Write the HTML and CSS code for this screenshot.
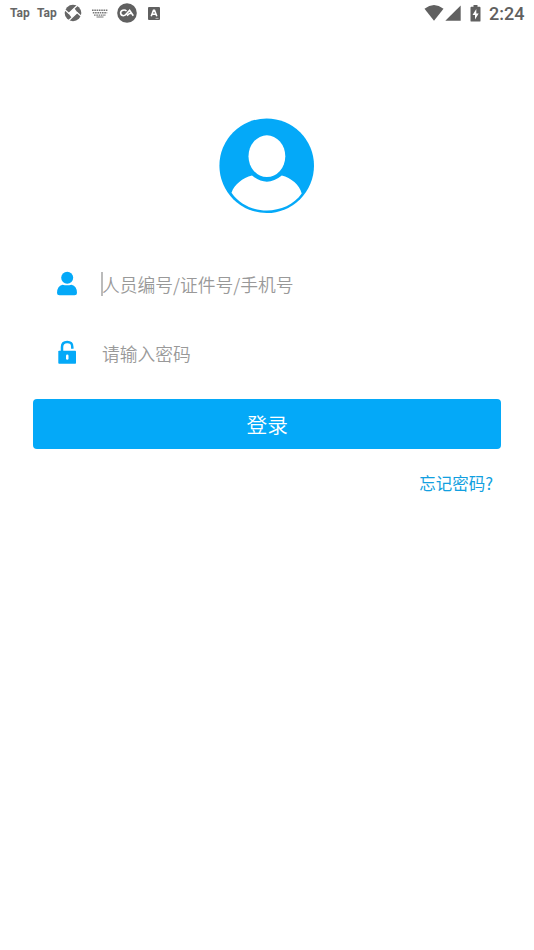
FILE: index.html
```html
<!DOCTYPE html>
<html lang="zh-CN">
<head>
<meta charset="utf-8">
<title>登录</title>
<link rel="stylesheet" href="styles.css">
</head>
<body>
<header class="status">
  <div class="notices">
    <span class="tap">Tap</span>
    <span class="tap tap-second">Tap</span>
    <svg class="aperture" width="18" height="18" viewBox="0 0 18 18">
      <circle cx="9" cy="9" r="8.300" fill="#666"/>
      <path d="M10.300 4.200 13.500 8.500 7.700 13.800 4.500 9.500Z" fill="#fff"/>
      <path d="M4.500 9.800 10.300 4.200 14 .8M13.500 8.200 7.700 13.800 4 17.200" fill="none" stroke="#fff" stroke-width="1.200"/>
      <path d="M13 8.500 17.500 12.500M5 9.500.5 5.500" fill="none" stroke="#fff" stroke-width="1.200"/>
    </svg>
    <svg class="keyboard" width="16" height="9" viewBox="0 0 16 9" fill="none" stroke="#777" stroke-width="1.400">
      <path stroke-dasharray="1.600 .7" d="M0 1.200H16M.8 3.700H15.200M2 6.100H14"/>
      <path d="M4.500 8H11.500" stroke-width="1"/>
    </svg>
    <svg class="ca" width="20" height="20" viewBox="0 0 20 20">
      <circle cx="10" cy="10" r="9.800" fill="#606060"/>
      <path d="M9.500 8Q8 6.500 5.800 7.200 3.500 8 3.600 10.200 4 12.700 6.500 12.700 8.200 12.600 9.500 10.800L12.600 7.200 16.300 12.800M10 12.600 12.500 10.500H14.700" fill="none" stroke="#fff" stroke-width="1.600"/>
    </svg>
    <svg class="letter" width="12" height="13" viewBox="0 0 12 13">
      <rect width="12" height="13" rx="1" fill="#606060"/>
      <path d="M3.200 9.300 5.500 3.300H6.500L8.800 9.300M4.200 7.300H7.800" fill="none" stroke="#fff" stroke-width="1.600"/>
      <path d="M7.500 11.400H10.500" stroke="#ccc" stroke-width=".8"/>
    </svg>
  </div>
  <div class="system">
    <svg width="20" height="16" viewBox="0 0 20 16"><path d="M.5 3.700Q10-3.500 19.500 3.700L10 15.700Z" fill="#606060"/></svg>
    <svg class="signal" width="16" height="16" viewBox="0 0 16 16"><path d="M15.700 .5V15.700H.3Z" fill="#606060"/></svg>
    <svg class="battery" width="11" height="17" viewBox="0 0 11 17">
      <path d="M3.500 0H7.500V1.700H9.600Q10.500 1.700 10.500 2.700V15.700Q10.500 16.600 9.600 16.600H1.400Q.5 16.600 .5 15.700V2.700Q.5 1.700 1.400 1.700H3.500Z" fill="#606060"/>
      <path d="M6.300 4 2.500 10H5V14.500L8.700 8.500H6.300Z" fill="#fff"/>
    </svg>
    <span class="clock">2:24</span>
  </div>
</header>
<main class="login">
  <svg class="avatar" width="96" height="96" viewBox="0 0 96 96">
    <circle cx="47.700" cy="47.700" r="47.300" fill="#04a9f8"/>
    <ellipse cx="47.900" cy="38.200" rx="18.400" ry="20.900" fill="#fff"/>
    <path d="M33 57.600C23.500 60 15.500 66.500 12.500 74.700C21 86.700 34 92.400 47.800 92.400S75 86.700 82.700 75.500C80.500 66.500 72 60.100 62.800 57.600Q47.900 69.700 33 57.600Z" fill="#fff"/>
  </svg>
  <div class="field">
    <svg width="22" height="26" viewBox="0 0 22 26" fill="#04a9f8">
      <circle cx="11.200" cy="6.700" r="6"/>
      <path d="M6.500 13.700Q11 14.700 15.500 13.700Q21 15 21 22Q21 24.200 18.500 24.200H3.500Q1 24.200 1 22Q1 15 6.500 13.700Z"/>
    </svg>
    <span class="hint caret">人员编号/证件号/手机号</span>
  </div>
  <div class="field">
    <svg width="22" height="26" viewBox="0 0 22 26">
      <path d="M6 11V7Q6 1.900 11.200 1.900T16.300 7V8.700" fill="none" stroke="#04a9f8" stroke-width="2.500"/>
      <rect x="2.300" y="10.700" width="17.700" height="13" rx=".8" fill="#04a9f8"/>
      <rect x="10" y="14.600" width="2.500" height="5.200" rx="1.250" fill="#fff"/>
    </svg>
    <span class="hint">请输入密码</span>
  </div>
  <button class="submit" type="button">登录</button>
  <a class="forgot">忘记密码?</a>
</main>
</body>
</html>
```
FILE: styles.css
```css
* { box-sizing: border-box; }
body {
  margin: 0;
  min-height: 950px;
  background: #fff;
  font-family: "Noto Sans CJK SC", sans-serif;
}
svg { display: block; flex: none; }
.status {
  display: flex;
  justify-content: space-between;
  height: 26px;
  padding: 0 9px 0 10px;
}
.notices, .system { display: flex; align-items: center; }
.tap {
  width: 20px;
  color: #666;
  font: 700 12px/20px Roboto, sans-serif;
}
.tap-second { margin-left: 7px; }
.aperture { margin-left: 7px; }
.keyboard { margin-left: 10px; }
.ca { margin-left: 9px; }
.letter { margin-left: 11px; }
.signal { margin-left: 1px; }
.battery { margin-left: 9px; }
.clock {
  width: 36px;
  margin-left: 8px;
  padding-top: 1px;
  color: #606060;
  font: 500 18px/26px Roboto, sans-serif;
  white-space: nowrap;
}
.login {
  display: flex;
  flex-direction: column;
  padding: 92px 33px 0;
}
.avatar { align-self: center; margin-bottom: 36px; }
.field {
  display: flex;
  align-items: center;
  height: 69px;
  padding-left: 23px;
}
.field svg { margin-top: -2px; }
.hint {
  margin-top: -2px;
  margin-left: 24px;
  color: #999;
  font-size: 17.75px;
  line-height: 24px;
  font-weight: 350;
}
.caret { box-shadow: -1px 0 #bbb, inset 1px 0 #bbb; }
.submit {
  height: 50px;
  margin: 11px 0 0 .3px;
  padding: 0;
  border: 0;
  border-radius: 4px;
  background: #04a9f8;
  color: #fff;
  font: 350 20.7px/50px "Noto Sans CJK SC", sans-serif;
}
.forgot {
  align-self: flex-end;
  margin: 22px 8px 0 0;
  color: #129fe0;
  font-size: 16.5px;
  line-height: 24px;
}
```
